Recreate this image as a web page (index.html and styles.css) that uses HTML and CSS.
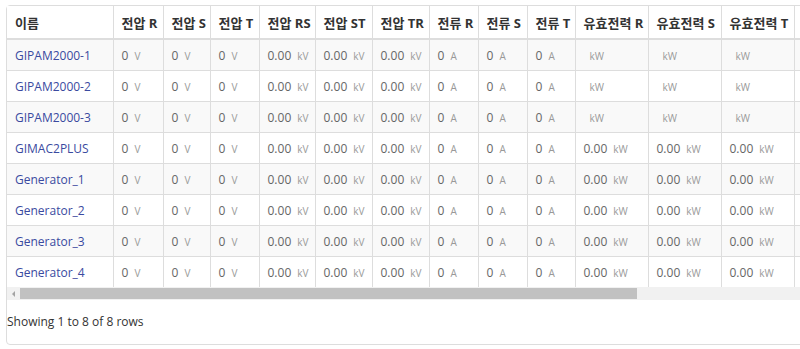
FILE: index.html
```html
<!DOCTYPE html>
<html lang="ko">
<head>
<meta charset="utf-8">
<title>Devices</title>
<link rel="stylesheet" href="styles.css">
</head>
<body>
<div class="panel">
  <div class="table-wrap">
    <table class="grid">
      <colgroup>
        <col class="w106"><col class="w50"><col class="w47"><col class="w49"><col class="w56"><col class="w57"><col class="w57"><col class="w49"><col class="w49"><col class="w48"><col class="w73"><col class="w73"><col class="w73"><col class="wrest">
      </colgroup>
      <thead>
        <tr>
          <th>이름</th><th>전압 R</th><th>전압 S</th><th>전압 T</th><th>전압 RS</th><th>전압 ST</th><th>전압 TR</th><th>전류 R</th><th>전류 S</th><th>전류 T</th><th>유효전력 R</th><th>유효전력 S</th><th>유효전력 T</th><th></th>
        </tr>
      </thead>
      <tbody>
        <tr>
          <td><a href="#">GIPAM2000-1</a></td>
          <td>0<span class="u">V</span></td><td>0<span class="u">V</span></td><td>0<span class="u">V</span></td>
          <td>0.00<span class="u">kV</span></td><td>0.00<span class="u">kV</span></td><td>0.00<span class="u">kV</span></td>
          <td>0<span class="u">A</span></td><td>0<span class="u">A</span></td><td>0<span class="u">A</span></td>
          <td><span class="u">kW</span></td><td><span class="u">kW</span></td><td><span class="u">kW</span></td>
          <td></td>
        </tr>
        <tr>
          <td><a href="#">GIPAM2000-2</a></td>
          <td>0<span class="u">V</span></td><td>0<span class="u">V</span></td><td>0<span class="u">V</span></td>
          <td>0.00<span class="u">kV</span></td><td>0.00<span class="u">kV</span></td><td>0.00<span class="u">kV</span></td>
          <td>0<span class="u">A</span></td><td>0<span class="u">A</span></td><td>0<span class="u">A</span></td>
          <td><span class="u">kW</span></td><td><span class="u">kW</span></td><td><span class="u">kW</span></td>
          <td></td>
        </tr>
        <tr>
          <td><a href="#">GIPAM2000-3</a></td>
          <td>0<span class="u">V</span></td><td>0<span class="u">V</span></td><td>0<span class="u">V</span></td>
          <td>0.00<span class="u">kV</span></td><td>0.00<span class="u">kV</span></td><td>0.00<span class="u">kV</span></td>
          <td>0<span class="u">A</span></td><td>0<span class="u">A</span></td><td>0<span class="u">A</span></td>
          <td><span class="u">kW</span></td><td><span class="u">kW</span></td><td><span class="u">kW</span></td>
          <td></td>
        </tr>
        <tr>
          <td><a href="#">GIMAC2PLUS</a></td>
          <td>0<span class="u">V</span></td><td>0<span class="u">V</span></td><td>0<span class="u">V</span></td>
          <td>0.00<span class="u">kV</span></td><td>0.00<span class="u">kV</span></td><td>0.00<span class="u">kV</span></td>
          <td>0<span class="u">A</span></td><td>0<span class="u">A</span></td><td>0<span class="u">A</span></td>
          <td>0.00<span class="u">kW</span></td><td>0.00<span class="u">kW</span></td><td>0.00<span class="u">kW</span></td>
          <td></td>
        </tr>
        <tr>
          <td><a href="#">Generator_1</a></td>
          <td>0<span class="u">V</span></td><td>0<span class="u">V</span></td><td>0<span class="u">V</span></td>
          <td>0.00<span class="u">kV</span></td><td>0.00<span class="u">kV</span></td><td>0.00<span class="u">kV</span></td>
          <td>0<span class="u">A</span></td><td>0<span class="u">A</span></td><td>0<span class="u">A</span></td>
          <td>0.00<span class="u">kW</span></td><td>0.00<span class="u">kW</span></td><td>0.00<span class="u">kW</span></td>
          <td></td>
        </tr>
        <tr>
          <td><a href="#">Generator_2</a></td>
          <td>0<span class="u">V</span></td><td>0<span class="u">V</span></td><td>0<span class="u">V</span></td>
          <td>0.00<span class="u">kV</span></td><td>0.00<span class="u">kV</span></td><td>0.00<span class="u">kV</span></td>
          <td>0<span class="u">A</span></td><td>0<span class="u">A</span></td><td>0<span class="u">A</span></td>
          <td>0.00<span class="u">kW</span></td><td>0.00<span class="u">kW</span></td><td>0.00<span class="u">kW</span></td>
          <td></td>
        </tr>
        <tr>
          <td><a href="#">Generator_3</a></td>
          <td>0<span class="u">V</span></td><td>0<span class="u">V</span></td><td>0<span class="u">V</span></td>
          <td>0.00<span class="u">kV</span></td><td>0.00<span class="u">kV</span></td><td>0.00<span class="u">kV</span></td>
          <td>0<span class="u">A</span></td><td>0<span class="u">A</span></td><td>0<span class="u">A</span></td>
          <td>0.00<span class="u">kW</span></td><td>0.00<span class="u">kW</span></td><td>0.00<span class="u">kW</span></td>
          <td></td>
        </tr>
        <tr>
          <td><a href="#">Generator_4</a></td>
          <td>0<span class="u">V</span></td><td>0<span class="u">V</span></td><td>0<span class="u">V</span></td>
          <td>0.00<span class="u">kV</span></td><td>0.00<span class="u">kV</span></td><td>0.00<span class="u">kV</span></td>
          <td>0<span class="u">A</span></td><td>0<span class="u">A</span></td><td>0<span class="u">A</span></td>
          <td>0.00<span class="u">kW</span></td><td>0.00<span class="u">kW</span></td><td>0.00<span class="u">kW</span></td>
          <td></td>
        </tr>
      </tbody>
    </table>
  </div>
  <div class="hscroll">
    <div class="arrow-left"></div>
    <div class="thumb"></div>
  </div>
  <div class="pagination-info">Showing 1 to 8 of 8 rows</div>
</div>
</body>
</html>
```

FILE: styles.css
```css
html {
  overflow: hidden;
}

body {
  margin: 5px 0 0 6px;
  font-family: "Open Sans", "Noto Sans CJK KR", sans-serif;
  font-size: 12px;
  color: #333;
  background: #fff;
}

.panel {
  width: 830px;
  border: 1px solid #dddddd;
  border-radius: 4px;
  box-sizing: border-box;
}

.table-wrap {
  overflow: hidden;
}

.grid {
  border-collapse: collapse;
  table-layout: fixed;
  width: 881px;
}

.w106 { width: 106px; }
.w50 { width: 50px; }
.w47 { width: 47px; }
.w48 { width: 48px; }
.w49 { width: 49px; }
.w56 { width: 56px; }
.w57 { width: 57px; }
.w73 { width: 73px; }
.wrest { width: 94px; }

.grid th,
.grid td {
  padding: 0 0 0 8px;
  text-align: left;
  white-space: nowrap;
  overflow: hidden;
  border-left: 1px solid #dddddd;
}

.grid th:first-child,
.grid td:first-child {
  border-left: 0;
}

.grid th {
  height: 32px;
  font-weight: 700;
  font-size: 13px;
  color: #333;
  background: #fff;
  border-bottom: 2px solid #dddddd;
}

.grid td {
  height: 30px;
  color: #666;
  border-top: 1px solid #dddddd;
}

.grid thead + tbody tr:first-child td {
  border-top: 0;
}

.grid tbody tr:nth-child(odd) td {
  background: #f9f9f9;
}

.grid a {
  color: #3a4aa0;
  text-decoration: none;
}

.u {
  margin-left: 6px;
  font-size: 10px;
  color: #999;
}

.hscroll {
  display: flex;
  align-items: center;
  height: 13px;
  background: #f1f1f1;
}

.arrow-left {
  width: 0;
  height: 0;
  margin: 0 5px 0 5px;
  border-top: 3px solid transparent;
  border-bottom: 3px solid transparent;
  border-right: 3px solid #a3a3a3;
}

.thumb {
  width: 617px;
  height: 11px;
  background: #c1c1c1;
}

.pagination-info {
  padding: 14px 0 14px 0;
  line-height: 16px;
  font-size: 12px;
  color: #333;
}
```
